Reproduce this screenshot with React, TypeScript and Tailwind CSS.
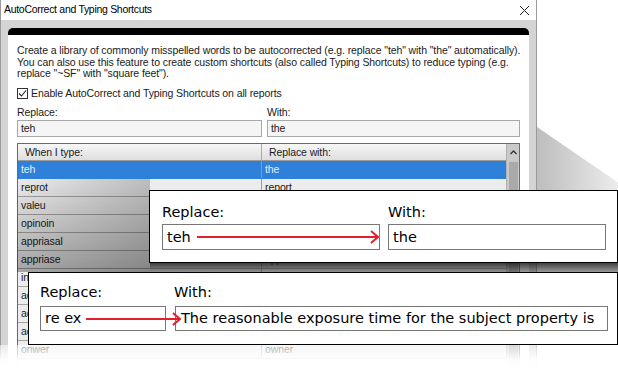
const rows: [string, string][] = [
  ["teh", "the"],
  ["reprot", "report"],
  ["valeu", "value"],
  ["opinoin", "opinion"],
  ["appriasal", "appraisal"],
  ["appriase", "appraise"],
  ["inspecton", "inspection"],
  ["adn", "and"],
  ["acn", "can"],
  ["adress", "address"],
  ["onwer", "owner"],
];

function Arrow({ width }: { width: number }) {
  return (
    <svg width={width} height={16} viewBox={`0 0 ${width} 16`} className="block">
      <line x1={0} y1={8} x2={width - 1} y2={8} stroke="#e2202b" strokeWidth={2} />
      <polyline
        points={`${width - 8},2 ${width - 1},8 ${width - 8},14`}
        fill="none"
        stroke="#e2202b"
        strokeWidth={2}
      />
    </svg>
  );
}

function Dialog() {
  return (
    <div className="w-[537px] h-full flex flex-col border-x border-[#9a9a9a] font-['Liberation_Sans',sans-serif] text-[10.5px] tracking-[-0.1px] text-[#1a1a1a]">
      <div className="h-[20px] shrink-0 bg-white flex items-center justify-between pl-[3px] pr-[6px]">
        <span className="text-[10.5px] tracking-[-0.3px] text-black">AutoCorrect and Typing Shortcuts</span>
        <svg width={11} height={11} viewBox="0 0 11 11">
          <path d="M1 1 L10 10 M10 1 L1 10" stroke="#222" strokeWidth={1} />
        </svg>
      </div>
      <div className="flex-1 bg-[#d4d4d4] px-[7px] pt-[8px] flex flex-col">
        <div className="flex-1 rounded-t-[5px] border-t-[7px] border-black bg-white pl-[9px] pr-[6px] pt-[10px] flex flex-col">
          <p className="leading-[11.5px] whitespace-nowrap">
            Create a library of commonly misspelled words to be autocorrected (e.g. replace "teh" with "the" automatically).
            <br />
            You can also use this feature to create custom shortcuts (also called Typing Shortcuts) to reduce typing (e.g.
            <br />
            replace "~SF" with "square feet").
          </p>
          <div className="mt-[7px] flex items-center gap-[3px] h-[14px]">
            <span className="w-[11px] h-[11px] border border-[#333] bg-white flex items-center justify-center">
              <svg width={9} height={9} viewBox="0 0 9 9">
                <path d="M1 4.5 L3.5 7 L8 1.5" fill="none" stroke="#222" strokeWidth={1.1} />
              </svg>
            </span>
            <span>Enable AutoCorrect and Typing Shortcuts on all reports</span>
          </div>
          <div className="mt-[5px] flex gap-[5px] leading-[13px]">
            <span className="w-[245px]">Replace:</span>
            <span>With:</span>
          </div>
          <div className="mt-[1px] flex gap-[5px]">
            <div className="w-[245px] h-[17px] border border-[#a8a8a8] bg-[#f5f5f5] pl-[3px] leading-[15px]">teh</div>
            <div className="w-[253px] h-[17px] border border-[#a8a8a8] bg-[#f5f5f5] pl-[3px] leading-[15px]">the</div>
          </div>
          <div className="mt-[6px] w-[503px] flex-1 border border-[#6a6a6a] flex overflow-hidden">
            <div className="flex-1 flex flex-col">
              <div className="h-[17px] shrink-0 flex bg-[linear-gradient(to_bottom,#f7f7f7,#dedede)] border-b border-[#9a9a9a] leading-[16px]">
                <div className="w-[244px] border-r border-[#aaa] pl-[7px]">When I type:</div>
                <div className="flex-1 pl-[7px]">Replace with:</div>
              </div>
              {rows.map(([a, b], i) => (
                <div
                  key={a}
                  className={
                    i === 0
                      ? "h-[18px] shrink-0 flex bg-[#2f80d8] text-[#e4efff] border-b border-[#2f80d8] leading-[17px]"
                      : "h-[18px] shrink-0 flex bg-[#ececec] border-b border-[#a4a4a4] leading-[17px]"
                  }
                >
                  <div className="w-[244px] border-r border-[#9a9a9a] pl-[3px]">{a}</div>
                  <div className="flex-1 pl-[3px]">{b}</div>
                </div>
              ))}
            </div>
            <div className="w-[13px] shrink-0 bg-[#c9c9c9] border-l border-[#b0b0b0] flex flex-col items-center">
              <svg width={9} height={14} viewBox="0 0 9 14" className="mt-[2px]">
                <path d="M1.5 8 L4.5 5 L7.5 8" fill="none" stroke="#333" strokeWidth={1.3} />
              </svg>
              <div className="mt-[2px] w-[9px] flex-1 bg-[#a9a9a9]" />
            </div>
          </div>
        </div>
      </div>
    </div>
  );
}

export default function App() {
  return (
    <div className="relative w-[618px] h-[370px] bg-white overflow-hidden">
      <Dialog />

      {/* shading under the callouts */}
      <div className="absolute left-[17px] top-[179px] w-[133px] h-[93px] pointer-events-none bg-[linear-gradient(to_right,rgba(0,0,0,0),rgba(0,0,0,0.2)),linear-gradient(to_bottom,rgba(0,0,0,0),rgba(0,0,0,0.3))]" />
      <div className="absolute left-[537px] top-[127px] w-[81px] h-[63px] pointer-events-none [clip-path:polygon(0_0,100%_88%,100%_100%,0_100%)] bg-[linear-gradient(to_right,#bdbdbd,#ececec)]" />
      <div className="absolute left-[150px] top-[262px] w-[468px] h-[10px] pointer-events-none bg-[linear-gradient(to_bottom,rgba(20,20,20,0.85),rgba(70,70,70,0.55))]" />

      {/* callout 1 */}
      <div className="absolute left-[149px] top-[190px] w-[469px] h-[73px] border border-black bg-white pl-[12px] pt-[12px] font-['DejaVu_Sans',sans-serif] text-[14.5px] text-black">
        <div className="flex gap-[8px] leading-[18px]">
          <span className="w-[218px]">Replace:</span>
          <span>With:</span>
        </div>
        <div className="mt-[3px] flex gap-[8px]">
          <div className="w-[218px] h-[26px] border border-[#777] pl-[4px] leading-[24px]">teh</div>
          <div className="w-[218px] h-[26px] border border-[#777] pl-[4px] leading-[24px]">the</div>
        </div>
      </div>
      <div className="absolute left-[197px] top-[229px] pointer-events-none">
        <Arrow width={182} />
      </div>

      {/* callout 2 */}
      <div className="absolute left-[28px] top-[272px] w-[590px] h-[73px] border border-black bg-white pl-[11px] pt-[10px] font-['DejaVu_Sans',sans-serif] text-[14.5px] text-black">
        <div className="flex gap-[8px] leading-[18px]">
          <span className="w-[126px]">Replace:</span>
          <span>With:</span>
        </div>
        <div className="mt-[5px] flex gap-[9px]">
          <div className="w-[126px] h-[25px] border border-[#777] pl-[4px] leading-[23px]">re ex</div>
          <div className="w-[433px] h-[25px] border border-[#777] pl-[5px] leading-[23px] whitespace-nowrap">
            The reasonable exposure time for the subject property is
          </div>
        </div>
      </div>
      <div className="absolute left-[86px] top-[311px] pointer-events-none">
        <Arrow width={95} />
      </div>

      {/* fade-out reflection at the bottom */}
      <div className="absolute left-0 top-[345px] w-[618px] h-[25px] pointer-events-none bg-[linear-gradient(to_bottom,rgba(255,255,255,0.55),rgba(255,255,255,0.97)_60%,#fff)]" />
    </div>
  );
}
